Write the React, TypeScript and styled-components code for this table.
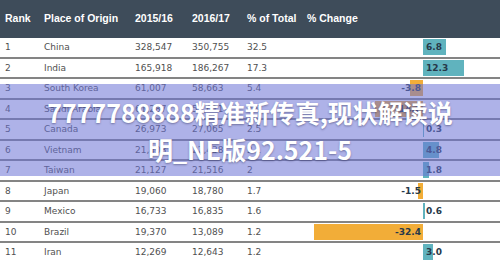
import styled, { createGlobalStyle } from "styled-components";

const GlobalStyle = createGlobalStyle`
  html, body {
    margin: 0;
    padding: 0;
    background: #ffffff;
    overflow: hidden;
  }
`;

const Page = styled.div`
  position: relative;
  width: 500px;
  height: 262px;
  overflow: hidden;
  background: #ffffff;
`;

const columns = "39px 91px 57px 55px 60px 1fr";

const HeaderRow = styled.div`
  display: grid;
  grid-template-columns: ${columns};
  align-items: center;
  height: 36px;
  padding-left: 5px;
  background-color: #3e4c5a;
  color: #ffffff;
  font-family: "Liberation Sans", Arial, sans-serif;
  font-weight: bold;
  font-size: 10.5px;
`;

const Row = styled.div<{ $first?: boolean }>`
  display: grid;
  grid-template-columns: ${columns};
  align-items: center;
  height: 18.5px;
  padding-left: 5px;
  border-top: 2px solid ${(p) => (p.$first ? "#3e4c5a" : "#848484")};
  font-family: "DejaVu Sans", Verdana, sans-serif;
  font-size: 9px;
  color: #505050;
`;

const Cell = styled.span`
  white-space: nowrap;
`;

const ChangeCell = styled.div`
  display: grid;
  grid-template-columns: 116px 1fr;
  height: 100%;
`;

const Half = styled.div<{ $side: "neg" | "pos" }>`
  display: grid;
  align-items: center;
  justify-items: ${(p) => (p.$side === "neg" ? "end" : "start")};
`;

const Bar = styled.div<{ $side: "neg" | "pos" }>`
  grid-area: 1 / 1;
  height: 16px;
  background-color: ${(p) => (p.$side === "neg" ? "#f2ad38" : "#60b3be")};
`;

const BarLabel = styled.span<{ $side: "neg" | "pos" }>`
  grid-area: 1 / 1;
  position: relative;
  font-family: "DejaVu Sans", Verdana, sans-serif;
  font-weight: bold;
  font-size: 9px;
  color: #27394a;
  padding: ${(p) => (p.$side === "neg" ? "0 2px 0 0" : "0 0 0 3px")};
`;

const Overlay = styled.div`
  position: absolute;
  left: 0;
  right: 0;
  top: 84px;
  height: 92px;
  display: flex;
  align-items: center;
  justify-content: center;
  background-color: rgba(108, 114, 214, 0.55);
`;

const Title = styled.div`
  font-family: "Noto Sans CJK SC", "Noto Sans", sans-serif;
  font-weight: bold;
  font-size: 25px;
  line-height: 37px;
  color: #ffffff;
  text-align: center;
  text-shadow: 0 1px 2px rgba(40, 40, 80, 0.45);
  margin-top: 2px;
`;

type Origin = {
  rank: number;
  place: string;
  y15: string;
  y16: string;
  total: string;
  change: number;
};

const data: Origin[] = [
  { rank: 1, place: "China", y15: "328,547", y16: "350,755", total: "32.5", change: 6.8 },
  { rank: 2, place: "India", y15: "165,918", y16: "186,267", total: "17.3", change: 12.3 },
  { rank: 3, place: "South Korea", y15: "61,007", y16: "58,663", total: "5.4", change: -3.8 },
  { rank: 4, place: "Saudi Arabia", y15: "61,287", y16: "52,611", total: "4.9", change: -14.2 },
  { rank: 5, place: "Canada", y15: "26,973", y16: "27,065", total: "2.5", change: 0.3 },
  { rank: 6, place: "Vietnam", y15: "21,403", y16: "22,438", total: "2.1", change: 4.8 },
  { rank: 7, place: "Taiwan", y15: "21,127", y16: "21,516", total: "2", change: 1.8 },
  { rank: 8, place: "Japan", y15: "19,060", y16: "18,780", total: "1.7", change: -1.5 },
  { rank: 9, place: "Mexico", y15: "16,733", y16: "16,835", total: "1.6", change: 0.6 },
  { rank: 10, place: "Brazil", y15: "19,370", y16: "13,089", total: "1.2", change: -32.4 },
  { rank: 11, place: "Iran", y15: "12,269", y16: "12,643", total: "1.2", change: 3.0 },
];

const PX_PER_UNIT = 3.35;

const ChangeBar = ({ value }: { value: number }) => {
  const width = Math.max(1, Math.round(Math.abs(value) * PX_PER_UNIT));
  const label = value.toFixed(1);
  if (value < 0) {
    return (
      <ChangeCell>
        <Half $side="neg">
          <Bar $side="neg" style={{ width }} />
          <BarLabel $side="neg">{label}</BarLabel>
        </Half>
        <Half $side="pos" />
      </ChangeCell>
    );
  }
  return (
    <ChangeCell>
      <Half $side="neg" />
      <Half $side="pos">
        <Bar $side="pos" style={{ width }} />
        <BarLabel $side="pos">{label}</BarLabel>
      </Half>
    </ChangeCell>
  );
};

export default function App() {
  return (
    <Page>
      <GlobalStyle />
      <HeaderRow>
        <Cell>Rank</Cell>
        <Cell>Place of Origin</Cell>
        <Cell>2015/16</Cell>
        <Cell>2016/17</Cell>
        <Cell>% of Total</Cell>
        <Cell>% Change</Cell>
      </HeaderRow>
      {data.map((d, i) => (
        <Row key={d.rank} $first={i === 0}>
          <Cell>{d.rank}</Cell>
          <Cell>{d.place}</Cell>
          <Cell>{d.y15}</Cell>
          <Cell>{d.y16}</Cell>
          <Cell>{d.total}</Cell>
          <ChangeBar value={d.change} />
        </Row>
      ))}
      <Overlay>
        <Title>
          7777788888精准新传真,现状解读说
          <br />
          明_NE版92.521-5
        </Title>
      </Overlay>
    </Page>
  );
}
